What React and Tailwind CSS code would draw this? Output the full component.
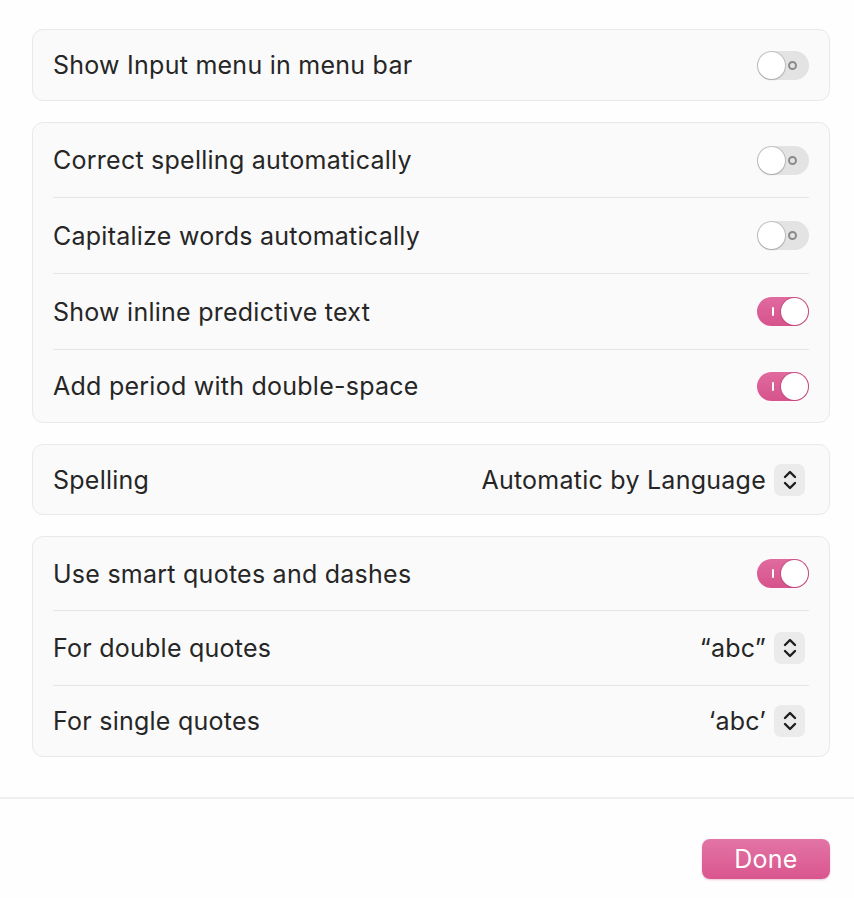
import React from "react";

function Toggle({ on }) {
  if (on) {
    return (
      <div className="relative w-[52px] h-[29px] rounded-full bg-gradient-to-b from-[#e06a9f] to-[#d6538c] shrink-0 ml-[1px]">
        <div className="absolute left-[15px] top-[10px] w-[2px] h-[9px] bg-white rounded-sm" />
        <div className="absolute right-[1px] top-[1px] w-[27px] h-[27px] rounded-full bg-white shadow-[0_0_0_1px_rgba(160,40,90,0.35)]" />
      </div>
    );
  }
  return (
    <div className="relative w-[52px] h-[29px] rounded-full bg-[#e3e3e3] shrink-0">
      <div className="absolute right-[12px] top-[10px] w-[9px] h-[9px] rounded-full border-2 border-[#8a8a8a]" />
      <div className="absolute left-[1px] top-[1px] w-[27px] h-[27px] rounded-full bg-white shadow-[0_0_0_1px_rgba(0,0,0,0.14),0_1px_2px_rgba(0,0,0,0.15)]" />
    </div>
  );
}

function Stepper() {
  return (
    <div className="w-[31px] h-[32px] rounded-[7px] bg-[#ebebeb] flex items-center justify-center shrink-0">
      <svg width="16" height="24" viewBox="0 0 16 24" fill="none" stroke="#1f1f1f" strokeWidth="2.4" strokeLinecap="round" strokeLinejoin="round">
        <path d="M3 9 L8 4 L13 9" />
        <path d="M3 15 L8 20 L13 15" />
      </svg>
    </div>
  );
}

function Row({ label, h, children }) {
  return (
    <div className={`flex items-center justify-between pl-5 pr-5 ${h}`}>
      <span className="pt-[2px]">{label}</span>
      {children}
    </div>
  );
}

function Sep() {
  return <div className="mx-5 h-px bg-[#e6e6e6]" />;
}

function Card({ children }) {
  return (
    <div className="rounded-[11px] border border-[#e9e9e9] bg-[#fafafa]">{children}</div>
  );
}

function Value({ text }) {
  return (
    <div className="flex items-center gap-[8px] mr-[4px]">
      <span className="pt-[2px]">{text}</span>
      <Stepper />
    </div>
  );
}

export default function App() {
  return (
    <div
      className="w-[854px] h-[898px] bg-[#fefefe] text-[#262626] text-[25px] tracking-[0.01em] flex flex-col"
      style={{ fontFamily: "Inter, 'Noto Sans', sans-serif" }}
    >
      <div className="pl-8 pr-6 pt-[29px] flex flex-col gap-[21px]">
        <Card>
          <Row label="Show Input menu in menu bar" h="h-[70px]">
            <Toggle on={false} />
          </Row>
        </Card>
        <Card>
          <Row label="Correct spelling automatically" h="h-[74px]">
            <Toggle on={false} />
          </Row>
          <Sep />
          <Row label="Capitalize words automatically" h="h-[75px]">
            <Toggle on={false} />
          </Row>
          <Sep />
          <Row label="Show inline predictive text" h="h-[75px]">
            <Toggle on={true} />
          </Row>
          <Sep />
          <Row label="Add period with double-space" h="h-[72px]">
            <Toggle on={true} />
          </Row>
        </Card>
        <Card>
          <Row label="Spelling" h="h-[69px]">
            <Value text="Automatic by Language" />
          </Row>
        </Card>
        <Card>
          <Row label="Use smart quotes and dashes" h="h-[73px]">
            <Toggle on={true} />
          </Row>
          <Sep />
          <Row label="For double quotes" h="h-[74px]">
            <Value text="“abc”" />
          </Row>
          <Sep />
          <Row label="For single quotes" h="h-[70px]">
            <Value text="‘abc’" />
          </Row>
        </Card>
      </div>
      <div className="mt-[40px] h-[2px] bg-[#f0f0f0]" />
      <div className="flex justify-end px-6 pt-[40px]">
        <button className="w-[128px] h-[40px] rounded-[8px] bg-gradient-to-b from-[#e274a6] to-[#d9558e] text-white text-[25px] leading-none shadow-[0_1px_2px_rgba(200,60,120,0.3)]">
          Done
        </button>
      </div>
    </div>
  );
}
